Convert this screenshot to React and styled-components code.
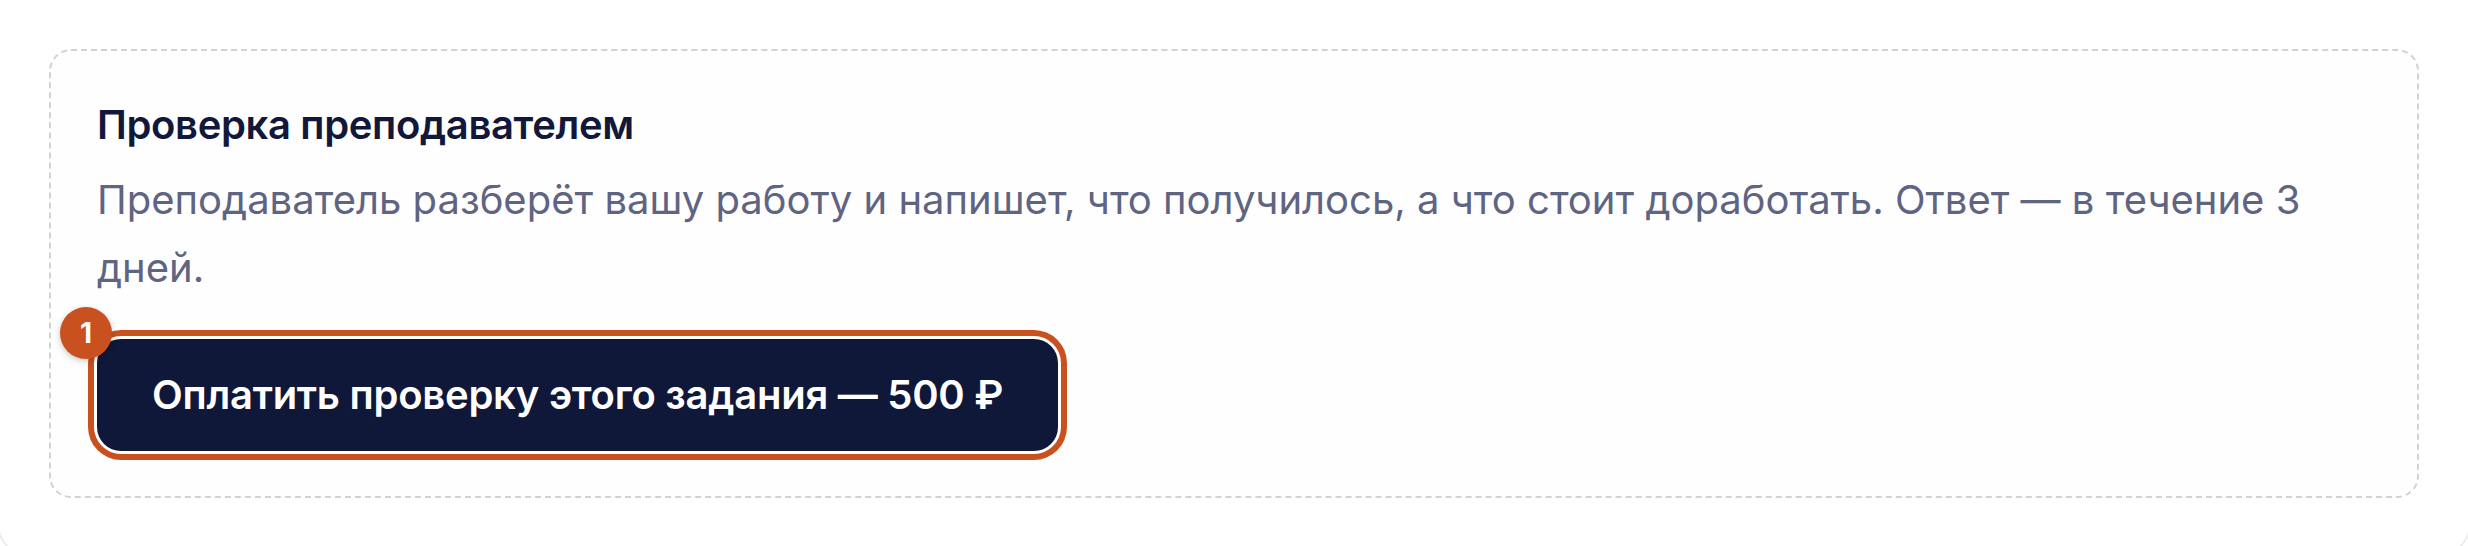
import React from "react";
import styled, { createGlobalStyle } from "styled-components";

const GlobalStyle = createGlobalStyle`
  html, body {
    margin: 0;
    padding: 0;
    background: #ffffff;
    overflow: hidden;
  }
  body {
    font-family: Inter, "Noto Sans", "Liberation Sans", sans-serif;
    -webkit-font-smoothing: antialiased;
  }
`;

const Frame = styled.div`
  margin: 0 -3px;
  height: 556px;
  box-sizing: border-box;
  padding: 49px 50px 0;
  border: 2px solid #ececec;
  border-top: none;
  border-radius: 0 0 32px 32px;
  background: #ffffff;
`;

const ReviewCard = styled.section`
  border: 2px dashed #d2d2d2;
  border-radius: 22px;
  padding: 47px 46px 45px;
  background: #fefefe;
  display: flex;
  flex-direction: column;
  align-items: flex-start;
`;

const Title = styled.h3`
  margin: 0 0 14px;
  font-size: 40px;
  line-height: 54px;
  font-weight: 600;
  letter-spacing: -0.35px;
  color: #11183a;
`;

const Description = styled.p`
  margin: 0;
  max-width: 2220px;
  font-size: 40px;
  line-height: 68px;
  font-weight: 400;
  color: #5f6482;
`;

const ButtonWrap = styled.div`
  position: relative;
  margin-top: 37px;
`;

const PayButton = styled.button`
  display: block;
  border: none;
  margin: 0;
  padding: 29px 55px;
  border-radius: 24px;
  background: #10183a;
  color: #ffffff;
  font-family: inherit;
  font-size: 40px;
  line-height: 54px;
  font-weight: 600;
  letter-spacing: -0.25px;
  cursor: pointer;
  box-shadow: 0 0 0 3px #ffffff, 0 0 0 9px #c8511f;
`;

const StepBadge = styled.span`
  position: absolute;
  left: -37px;
  top: -32px;
  width: 52px;
  height: 52px;
  border-radius: 50%;
  background: #c8511f;
  color: #ffffff;
  font-size: 28px;
  font-weight: 700;
  display: flex;
  align-items: center;
  justify-content: center;
  box-shadow: 0 2px 6px rgba(0, 0, 0, 0.22);
`;

export default function App() {
  return (
    <>
      <GlobalStyle />
      <Frame>
        <ReviewCard>
          <Title>Проверка преподавателем</Title>
          <Description>
            Преподаватель разберёт вашу работу и напишет, что получилось, а что
            стоит доработать. Ответ — в течение 3 дней.
          </Description>
          <ButtonWrap>
            <PayButton type="button">
              Оплатить проверку этого задания — 500 ₽
            </PayButton>
            <StepBadge>1</StepBadge>
          </ButtonWrap>
        </ReviewCard>
      </Frame>
    </>
  );
}
